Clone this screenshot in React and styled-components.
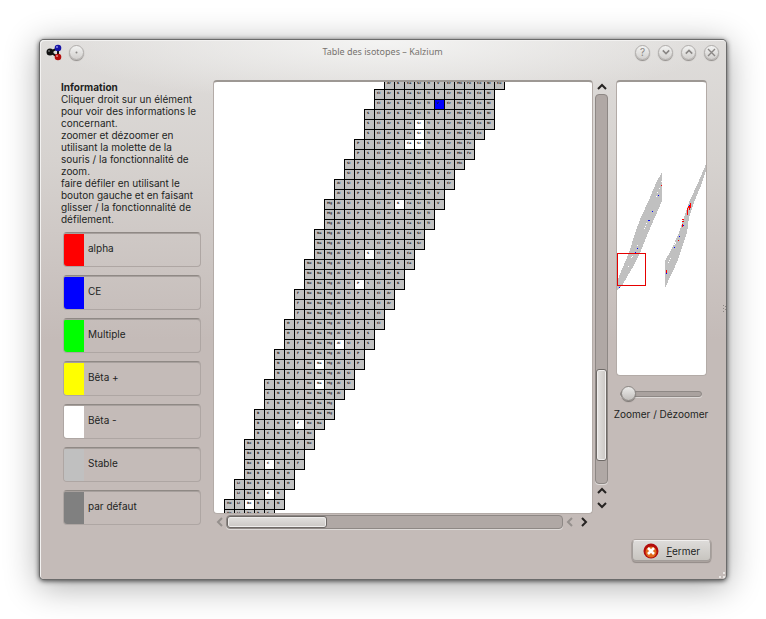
import React from 'react';
import styled, { createGlobalStyle } from 'styled-components';

const Global = createGlobalStyle`
  * { box-sizing: border-box; }
  body { margin: 0; background: #fff; font: 10px/12px Inter, "DejaVu Sans", sans-serif; color: #221f1e; }
  button, input { font: inherit; color: inherit; }
`;

const Desktop = styled.main`
  min-height: 100vh;
  padding: 40px;
  display: flex;
  background: #fff;
`;

const Window = styled.section`
  flex: 1;
  min-width: 0;
  min-height: 539px;
  display: flex;
  flex-direction: column;
  position: relative;
  border-radius: 4px;
  background:
    radial-gradient(ellipse 340px 64px at 50% 0, #f4f4f3, #ececea00),
    linear-gradient(#dfdddb 0, #d6d2cf 120px, #c4bbb8 300px);
  box-shadow: inset 1px 1px 0 #f3f2f1, 0 0 0 1px #6b6b6b, 0 1px 5px 1px #000000b0, 0 6px 34px 2px #00000052;
`;

const TitleBar = styled.header`
  height: 24px;
  padding: 0 7px 0 6px;
  display: grid;
  grid-template-columns: 1fr auto 1fr;
  align-items: center;
`;

const TitleGroup = styled.div`
  display: flex;
  align-items: center;
  gap: ${(p) => p.$gap}px;
  justify-content: ${(p) => (p.$end ? 'flex-end' : 'flex-start')};
`;

const Title = styled.h1`
  margin: 0;
  font: 400 9px/12px "Noto Sans", sans-serif;
  color: #77736f;
`;

const RoundButton = styled.button`
  width: 15px;
  height: 15px;
  padding: 0;
  border: 1px solid #b0adab;
  border-radius: 50%;
  display: grid;
  place-items: center;
  color: #8a8785;
  background: linear-gradient(#f3f3f2, #d2d0ce);
  box-shadow: 0 1px 1px #8f8b88;
`;

const Body = styled.div`
  flex: 1;
  display: grid;
  grid-template-columns: 152px minmax(0, 1fr) 96px;
  padding: 16px 17px 0 21px;
`;

const Side = styled.aside`
  display: flex;
  flex-direction: column;
  padding: 1px 12px 0 0;
`;

const Info = styled.p`
  margin: 0;
  white-space: nowrap;
`;

const Legend = styled.ul`
  list-style: none;
  margin: 7px 0 0 2px;
  padding: 0;
  display: flex;
  flex-direction: column;
  gap: 8px;
`;

const LegendItem = styled.li`
  height: 35px;
  display: flex;
  align-items: center;
  gap: 4px;
  overflow: hidden;
  border: 1px solid #aea6a3;
  border-top-color: #8f8985;
  border-radius: 4px;
  padding-bottom: 4px;
  box-shadow: inset 0 1px 0 #a7a09d;
`;

const Swatch = styled.span`
  align-self: stretch;
  margin: 1px 0 -4px;
  width: 20px;
  background: ${(p) => p.$color};
`;

const Viewer = styled.section`
  display: grid;
  grid-template-columns: minmax(0, 1fr) 15px;
  grid-template-rows: minmax(0, 434px) 16px;
  gap: 0 1px;
  align-content: start;
  padding-right: 4px;
`;

const Frame = styled.div`
  height: ${(p) => p.$height}px;
  overflow: hidden;
  background: #fff;
  border: 1px solid #b3aba7;
  border-top: 2px solid #9d9894;
  border-radius: 4px;
  svg { display: block; }
`;

const VScroll = styled.div`
  display: flex;
  flex-direction: column;
  align-items: center;
  padding-bottom: 2px;
`;

const HScroll = styled.div`
  display: flex;
  align-items: center;
  padding-right: 2px;
`;

const Arrow = styled.button`
  width: ${(p) => p.$w}px;
  height: ${(p) => p.$h}px;
  flex: none;
  padding: 0;
  border: 0;
  background: none;
  display: grid;
  place-items: center;
  color: ${(p) => (p.$off ? '#95908d' : '#262322')};
`;

const Track = styled.div`
  flex: 1;
  display: flex;
  flex-direction: ${(p) => (p.$vertical ? 'column' : 'row')};
  width: ${(p) => (p.$vertical ? '13px' : 'auto')};
  height: ${(p) => (p.$vertical ? 'auto' : '14px')};
  padding: ${(p) => (p.$vertical ? '274px 0 0' : '0')};
  border: 1px solid #8e8885;
  border-radius: 4px;
  background: #b0a8a5;
  box-shadow: 0 1px 0 #dedad8;
`;

const Thumb = styled.div`
  width: ${(p) => (p.$vertical ? 'auto' : '100px')};
  height: ${(p) => (p.$vertical ? '92px' : 'auto')};
  border: 1px solid #6f6a67;
  border-radius: 3px;
  background: linear-gradient(${(p) => (p.$vertical ? '90deg' : '180deg')}, #e3e1df, #cbc7c4);
  box-shadow: inset 0 0 0 1px #efedec;
`;

const Overview = styled.aside`
  display: flex;
  flex-direction: column;
  align-items: center;
`;

const MapFrame = styled(Frame)`
  width: 91px;
`;

const Slider = styled.input`
  appearance: none;
  width: 82px;
  height: 16px;
  margin: 10px 0 6px;
  background: none;
  &::-webkit-slider-runnable-track {
    height: 6px;
    border: 1px solid #8e8885;
    border-radius: 3px;
    background: #aaa29f;
    box-shadow: 0 1px 0 #dedad8;
  }
  &::-webkit-slider-thumb {
    appearance: none;
    width: 15px;
    height: 15px;
    margin-top: -6px;
    border: 1px solid #8b8784;
    border-radius: 50%;
    background: linear-gradient(#ecebea, #c2bfbc);
    box-shadow: 0 1px 1px #77726f;
  }
`;

const ZoomLabel = styled.label`
  white-space: nowrap;
`;

const Footer = styled.footer`
  display: flex;
  justify-content: flex-end;
  padding: 0 15px 18px;
`;

const CloseButton = styled.button`
  width: 79px;
  height: 21px;
  padding: 0 10px;
  display: flex;
  align-items: center;
  justify-content: space-between;
  border: 1px solid #a39d9a;
  border-top-color: #f1efee;
  border-radius: 4px;
  background: linear-gradient(#dddbd9, #c8c5c0);
  box-shadow: 0 0 0 1px #aaa29e, 0 2px 1px #938b88;
`;

const Grip = styled.svg`
  position: absolute;
  right: 0;
  bottom: 0;
`;

const SideGrip = styled.svg`
  position: absolute;
  right: 0;
  top: 49%;
`;

const symbols = 'He Li Be B C N O F Ne Na Mg Al Si P S Cl Ar K Ca Sc Ti V Cr Mn Fe Co Ni Cu'.split(' ');

// First and last element column of each isotope row, heaviest first.
const rows = [
  [16, 27], [15, 26], [15, 26], [14, 26], [14, 26], [14, 25], [13, 24], [13, 24],
  [12, 23], [12, 22], [11, 22], [11, 21], [10, 21], [10, 20], [10, 20], [9, 19],
  [9, 19], [9, 18], [8, 18], [8, 17], [8, 17], [7, 16], [7, 16], [7, 15],
  [6, 15], [6, 14], [6, 14], [5, 13], [5, 13], [5, 12], [4, 12], [4, 11],
  [4, 10], [3, 10], [3, 9], [3, 8], [2, 8], [2, 7], [2, 7], [2, 6],
  [1, 6], [1, 5], [0, 5], [0, 4],
];

const special = {
  '2-21': '#00f', '4-19': '#fff', '5-19': '#fff', '6-18': '#fff', '6-19': '#fff',
  '12-17': '#fff', '17-14': '#fff', '20-13': '#fff', '26-11': '#fff', '28-9': '#fff',
  '30-9': '#fff', '34-7': '#fff', '38-4': '#fff', '41-4': '#fff', '42-2': '#fff',
};

const legend = [
  ['alpha', '#f00'], ['CE', '#00f'], ['Multiple', '#0f0'], ['Bêta +', '#ff0'],
  ['Bêta -', '#fff'], ['Stable', '#c0c0c0'], ['par défaut', '#808080'],
];

function IsotopeChart() {
  return (
    <svg width="378" height="441" role="img" aria-label="Table des isotopes" fontFamily="DejaVu Sans" fontSize="3" fontWeight="700">
      {rows.map(([from, to], r) =>
        symbols.slice(from, to + 1).map((name, i) => {
          const col = from + i;
          const x = 10 + col * 10;
          const y = r * 10 - 3;
          return (
            <g key={name}>
              <rect x={x} y={y} width="11" height="11" fill="#000" />
              <rect x={x + 1} y={y + 1} width="9" height="9" fill={special[`${r}-${col}`] || '#c0c0c0'} />
              <text x={x + 3} y={y + 5} fill="#222">{name}</text>
            </g>
          );
        })
      )}
    </svg>
  );
}

const mapDots = [
  ['#f00', 44, 103, 1, 1], ['#00f', 41, 113, 1, 1], ['#00f', 35, 129, 1, 1], ['#00f', 31, 138, 2, 1],
  ['#00f', 20, 166, 1, 1], ['#00f', 18, 170, 1, 1], ['#00f', 2, 205, 1, 1],
  ['#fff', 44, 99, 1, 1], ['#fff', 42, 106, 1, 1], ['#fff', 40, 110, 1, 1], ['#fff', 39, 114, 1, 1],
  ['#fff', 29, 141, 1, 1], ['#fff', 28, 144, 1, 1], ['#fff', 27, 146, 1, 1], ['#fff', 20, 163, 1, 1],
  ['#fff', 15, 174, 1, 1], ['#fff', 14, 175, 1, 1], ['#fff', 11, 184, 1, 1],
  ['#f00', 73, 121, 1, 5], ['#f00', 71, 124, 2, 2], ['#f00', 70, 126, 1, 7], ['#f00', 72, 126, 1, 2], ['#00f', 72, 123, 1, 1],
  ['#f00', 65, 137, 2, 1], ['#f00', 65, 139, 2, 1], ['#f00', 65, 142, 1, 3], ['#00f', 66, 143, 1, 1],
  ['#00f', 62, 154, 1, 1], ['#f00', 61, 158, 1, 1], ['#00f', 57, 165, 1, 1], ['#fff', 58, 160, 1, 2],
  ['#fff', 57, 162, 1, 1], ['#fff', 53, 176, 1, 1], ['#fff', 52, 178, 1, 1], ['#fff', 51, 180, 1, 1],
  ['#f00', 49, 188, 1, 3], ['#00f', 49, 191, 1, 1],
];

function MapChart() {
  return (
    <svg width="89" height="292" shapeRendering="crispEdges" role="img" aria-label="Vue d’ensemble">
      <path fill="#c0c0c0" d="M45 90V119L38 135 31 151 23 171 17 183 10 195 6 202 0 209V201L2 194 6 185 12 171 18 151 24 135 32 118 39 101z" />
      <path fill="#c0c0c0" d="M89 82V88L85 101 78 118 72 135 70 151 64 168 61 178 55 191 48 206V179L54 168 62 151 67 135 73 118 81 101z" />
      {mapDots.map(([c, x, y, w, h]) => (
        <rect key={`${x}-${y}`} x={x} y={y} width={w} height={h} fill={c} />
      ))}
      <path fill="none" stroke="#e60000" d="M0.5 171.5h28v32h-28z" />
    </svg>
  );
}

const turns = { up: 0, right: 90, down: 180, left: 270 };

function Chevron({ dir, size = 10, weight = 2 }) {
  return (
    <svg width={size} height={size} viewBox="0 0 10 10" fill="none" stroke="currentColor" strokeWidth={weight}>
      <path transform={`rotate(${turns[dir]} 5 5)`} d="M1 7l4-4 4 4" />
    </svg>
  );
}

function Logo() {
  return (
    <svg width="17" height="17" viewBox="0 0 17 17">
      <path d="M4 8l8-4v9z" fill="none" stroke="#111" strokeWidth="2" />
      <circle cx="4" cy="8" r="3.5" fill="#111" />
      <circle cx="12" cy="4" r="3.3" fill="#1512a5" />
      <circle cx="12" cy="13" r="3.3" fill="#b30c0c" />
      <circle cx="11" cy="3" r="1" fill="#8f8fe8" />
      <circle cx="11" cy="12" r="1" fill="#ee8a8a" />
      <circle cx="3" cy="7" r="1" fill="#666" />
    </svg>
  );
}

export default function App() {
  return (
    <>
      <Global />
      <Desktop>
        <Window>
          <TitleBar>
            <TitleGroup $gap={6}>
              <Logo />
              <RoundButton aria-label="Menu">
                <svg width="3" height="3"><circle cx="1.5" cy="1.5" r="1" fill="currentColor" /></svg>
              </RoundButton>
            </TitleGroup>
            <Title>Table des isotopes – Kalzium</Title>
            <TitleGroup $gap={8} $end>
              <RoundButton aria-label="Aide">?</RoundButton>
              <RoundButton aria-label="Réduire"><Chevron dir="down" size={8} /></RoundButton>
              <RoundButton aria-label="Agrandir"><Chevron dir="up" size={8} /></RoundButton>
              <RoundButton aria-label="Fermer la fenêtre">
                <svg width="9" height="9" stroke="currentColor" strokeWidth="1.4"><path d="M1 1l7 7M8 1l-7 7" /></svg>
              </RoundButton>
            </TitleGroup>
          </TitleBar>
          <Body>
            <Side>
              <Info>
                <b>Information</b><br />
                Cliquer droit sur un élément<br />
                pour voir des informations le<br />
                concernant.<br />
                zoomer et dézoomer en<br />
                utilisant la molette de la<br />
                souris / la fonctionnalité de<br />
                zoom.<br />
                faire défiler en utilisant le<br />
                bouton gauche et en faisant<br />
                glisser / la fonctionnalité de<br />
                défilement.
              </Info>
              <Legend>
                {legend.map(([label, color]) => (
                  <LegendItem key={label}><Swatch $color={color} />{label}</LegendItem>
                ))}
              </Legend>
            </Side>
            <Viewer>
              <Frame $height={434}><IsotopeChart /></Frame>
              <VScroll>
                <Arrow $w={13} $h={14} aria-label="Défiler vers le haut"><Chevron dir="up" /></Arrow>
                <Track $vertical><Thumb $vertical /></Track>
                <Arrow $w={13} $h={14} aria-label="Page précédente"><Chevron dir="up" /></Arrow>
                <Arrow $w={13} $h={14} aria-label="Défiler vers le bas"><Chevron dir="down" /></Arrow>
              </VScroll>
              <HScroll>
                <Arrow $w={13} $h={14} $off aria-label="Défiler à gauche"><Chevron dir="left" /></Arrow>
                <Track><Thumb /></Track>
                <Arrow $w={14} $h={14} $off aria-label="Page à gauche"><Chevron dir="left" /></Arrow>
                <Arrow $w={14} $h={14} aria-label="Défiler à droite"><Chevron dir="right" /></Arrow>
              </HScroll>
            </Viewer>
            <Overview>
              <MapFrame $height={296}><MapChart /></MapFrame>
              <Slider id="zoom" type="range" min="0" max="100" defaultValue="0" />
              <ZoomLabel htmlFor="zoom">Zoomer / Dézoomer</ZoomLabel>
            </Overview>
          </Body>
          <Footer>
            <CloseButton>
              <svg width="16" height="16" viewBox="0 0 16 16">
                <circle cx="8" cy="8" r="7.5" fill="#b30b0b" />
                <circle cx="8" cy="9" r="5.5" fill="#e0691c" />
                <path d="M5 5l6 6M11 5l-6 6" stroke="#fff" strokeWidth="2.6" />
              </svg>
              <span><u>F</u>ermer</span>
            </CloseButton>
          </Footer>
          <Grip width="8" height="8" fill="#e9e6e4">
            <path d="M5 1h2v2h-2zM5 5h2v2h-2zM1 5h2v2h-2z" />
          </Grip>
          <SideGrip width="3" height="10" fill="#8c8683">
            <path d="M0 1h1v1h-1zM0 4h1v1h-1zM0 7h1v1h-1zM2 2h1v1h-1zM2 5h1v1h-1z" />
          </SideGrip>
        </Window>
      </Desktop>
    </>
  );
}
